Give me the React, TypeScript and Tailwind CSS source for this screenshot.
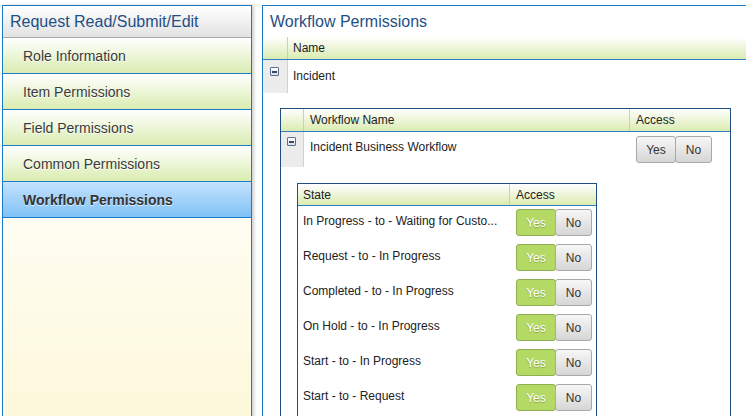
import React from "react";

const menu = ["Role Information", "Item Permissions", "Field Permissions", "Common Permissions"];

const states = [
  "In Progress - to - Waiting for Custo...",
  "Request - to - In Progress",
  "Completed - to - In Progress",
  "On Hold - to - In Progress",
  "Start - to - In Progress",
  "Start - to - Request",
];

const CollapseIcon = () => (
  <div className="w-[9px] h-[9px] border border-[#5b6f8f] rounded-[1px] bg-linear-to-b from-white to-[#d6dfec] flex items-center justify-center">
    <div className="w-[5px] h-[2px] bg-[#3a4a66]" />
  </div>
);

const grayBtn =
  "flex items-center justify-center rounded-[3px] border border-[#a9a9a9] bg-linear-to-b from-[#f7f7f7] to-[#d6d6d6] text-[#333]";

const YesNo = ({ green }: { green?: boolean }) => (
  <div className="flex h-[27px] text-[12px]">
    <div
      className={
        green
          ? "w-[40px] flex items-center justify-center rounded-[3px] border border-[#8faf52] bg-[#b4d964] text-white [text-shadow:0_1px_1px_rgba(0,0,0,0.25)]"
          : `w-[40px] ${grayBtn}`
      }
    >
      Yes
    </div>
    <div className={`w-[37px] -ml-px ${grayBtn}`}>No</div>
  </div>
);

const App = () => {
  return (
    <div className="w-[746px] h-[416px] overflow-hidden bg-white flex items-start pt-[5px] font-['Liberation_Sans',Arial,sans-serif]">
      {/* side menu */}
      <div className="ml-[2px] w-[250px] h-[420px] shrink-0 border border-[#1a7ac8] flex flex-col shadow-[2px_0_3px_rgba(0,0,0,0.2)]">
        <div className="h-[32px] shrink-0 border-b border-[#a9a9a9] bg-linear-to-b from-white to-[#e2e2e2] pl-[7px] flex items-center text-[16px] text-[#1f4f86]">
          Request Read/Submit/Edit
        </div>
        {menu.map((m) => (
          <div
            key={m}
            className="h-[36px] shrink-0 border-b border-[#1a7ac8] bg-linear-to-b from-white to-[#daecb0] pl-[20px] pt-[2px] flex items-center text-[14px] text-[#3a3a3a] [text-shadow:0_1px_0_white]"
          >
            {m}
          </div>
        ))}
        <div className="h-[36px] shrink-0 border-b border-[#1a7ac8] bg-linear-to-b from-[#c4e1fd] to-[#7fc2f6] pl-[20px] pt-[2px] flex items-center text-[14px] font-bold text-[#333] [text-shadow:0_1px_0_rgba(255,255,255,0.7)]">
          Workflow Permissions
        </div>
        <div className="flex-1 bg-linear-to-b from-[#fffdf2] to-[#fdf8da]" />
      </div>

      {/* main panel */}
      <div className="ml-[10px] w-[520px] h-[420px] shrink-0 border-l border-t border-[#1a7ac8] bg-white text-[12px] text-[#222]">
        <div className="h-[31px] pl-[7px] flex items-center text-[16px] text-[#1f4f86]">Workflow Permissions</div>

        <div className="h-[23px] flex border-b border-[#2a7fc6] bg-linear-to-b from-white to-[#dbebb0]">
          <div className="w-[25px] border-r border-[#c8d2b8]" />
          <div className="pl-[5px] flex items-center">Name</div>
        </div>

        <div className="flex h-[33px]">
          <div className="w-[25px] bg-[#ececec] border-r border-[#d2d2d2] pl-[7px] pt-[7px]">
            <CollapseIcon />
          </div>
          <div className="pl-[5px] pt-[9px] leading-[14px]">Incident</div>
        </div>

        <div className="pl-[17px] pt-[15px]">
          <div className="w-[451px] border-l border-t border-r border-[#1d5080]">
            <div className="h-[23px] flex border-b border-[#2a7fc6] bg-linear-to-b from-white to-[#dbebb0]">
              <div className="w-[23px] border-r border-[#c8d2b8]" />
              <div className="flex-1 pl-[6px] flex items-center">Workflow Name</div>
              <div className="w-[101px] border-l border-[#c8d2b8] pl-[6px] flex items-center">Access</div>
            </div>

            <div className="flex h-[35px]">
              <div className="w-[23px] bg-[#ececec] border-r border-[#d2d2d2] pl-[6px] pt-[5px]">
                <CollapseIcon />
              </div>
              <div className="flex-1 pl-[6px] pt-[8px] leading-[14px]">Incident Business Workflow</div>
              <div className="w-[101px] pl-[7px] pt-[4px]">
                <YesNo />
              </div>
            </div>

            <div className="pl-[16px] pt-[16px]">
              <div className="w-[300px] border-l border-t border-r border-[#1d5080]">
                <div className="h-[22px] flex border-b border-[#2a7fc6] bg-linear-to-b from-white to-[#dbebb0]">
                  <div className="flex-1 pl-[5px] flex items-center">State</div>
                  <div className="w-[87px] border-l border-[#c8d2b8] pl-[6px] flex items-center">Access</div>
                </div>
                {states.map((s) => (
                  <div key={s} className="flex h-[35px]">
                    <div className="flex-1 pl-[5px] pt-[8px] leading-[14px] whitespace-nowrap overflow-hidden">{s}</div>
                    <div className="w-[87px] pl-[7px] pt-[3px]">
                      <YesNo green />
                    </div>
                  </div>
                ))}
              </div>
            </div>
          </div>
        </div>
      </div>
    </div>
  );
};

export default App;
